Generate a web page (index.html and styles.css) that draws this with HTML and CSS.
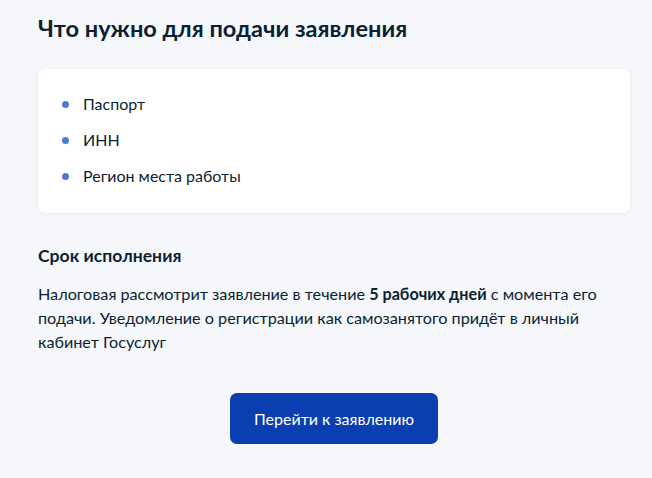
FILE: index.html
```html
<!DOCTYPE html>
<html lang="ru">
<head>
<meta charset="utf-8">
<link rel="stylesheet" href="styles.css">
</head>
<body>
<main class="page">
  <h1 class="title">Что нужно для подачи заявления</h1>
  <section class="card">
    <ul class="list">
      <li class="item">Паспорт</li>
      <li class="item">ИНН</li>
      <li class="item">Регион места работы</li>
    </ul>
  </section>
  <h2 class="subtitle">Срок исполнения</h2>
  <p class="text">Налоговая рассмотрит заявление в течение <b>5 рабочих дней</b> с момента его подачи. Уведомление о регистрации как самозанятого придёт в личный кабинет Госуслуг</p>
  <div class="actions">
    <button class="btn">Перейти к заявлению</button>
  </div>
</main>
</body>
</html>
```
FILE: styles.css
```css
html, body {
  margin: 0;
  padding: 0;
  background: #f5f7fb;
}
body {
  font-family: Lato, "Noto Sans", sans-serif;
  color: #0b1f33;
}
.page {
  padding: 14px 22px 0 38px;
}
.title {
  margin: 0;
  font-size: 23.6px;
  line-height: 28px;
  font-weight: 700;
}
.card {
  margin-top: 27px;
  background: #fff;
  border-radius: 8px;
  box-shadow: 0 1px 4px rgba(11, 31, 51, 0.06);
  padding: 23px 24px 25px 24px;
}
.list {
  list-style: none;
  margin: 0;
  padding: 0;
  display: flex;
  flex-direction: column;
  gap: 12px;
}
.item {
  position: relative;
  padding-left: 21px;
  font-size: 16px;
  line-height: 24px;
}
.item::before {
  content: "";
  position: absolute;
  left: 0;
  top: 9px;
  width: 7px;
  height: 7px;
  border-radius: 50%;
  background: #4e7bd8;
}
.subtitle {
  margin: 31px 0 0;
  font-size: 17.6px;
  line-height: 24px;
  font-weight: 700;
}
.text {
  margin: 14px 0 0;
  font-size: 16.2px;
  line-height: 24px;
}
.text b {
  font-weight: 700;
}
.actions {
  display: flex;
  justify-content: center;
  margin-top: 39px;
}
.btn {
  width: 208px;
  height: 51px;
  border: 0;
  border-radius: 7px;
  background: #0b3fb1;
  color: #fff;
  font-family: Lato, "Noto Sans", sans-serif;
  font-size: 16px;
}
```
